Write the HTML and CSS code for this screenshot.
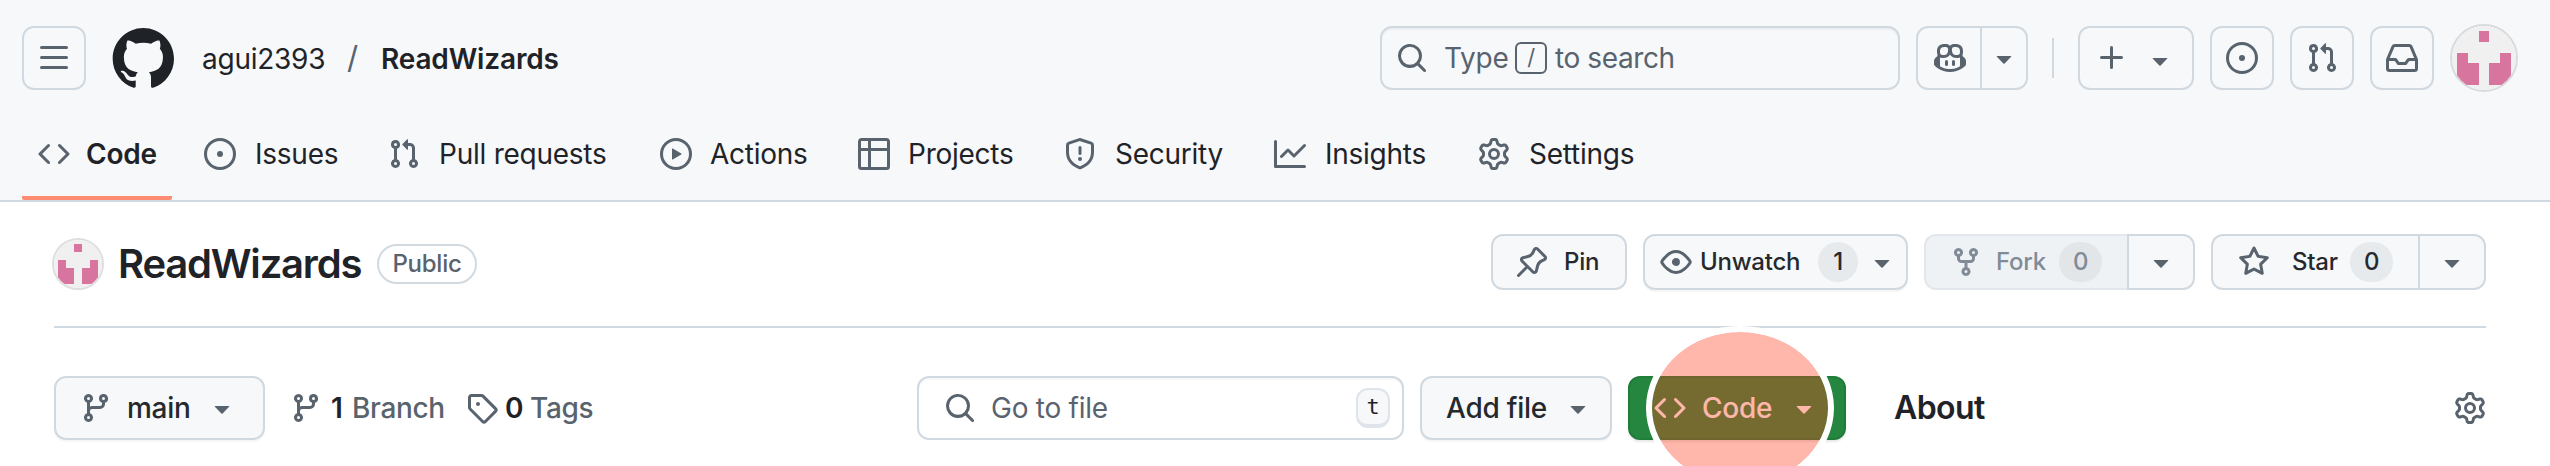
FILE: index.html
```
<!DOCTYPE html>
<html lang="en">
<head>
<meta charset="utf-8">
<title>ReadWizards</title>
<link rel="stylesheet" href="styles.css">
</head>
<body>
<svg class="sprite" aria-hidden="true">
  <symbol id="bars" viewBox="0 0 16 16"><path d="M1 2.75A.75.75 0 0 1 1.75 2h12.5a.75.75 0 0 1 0 1.5H1.75A.75.75 0 0 1 1 2.75Zm0 5A.75.75 0 0 1 1.75 7h12.5a.75.75 0 0 1 0 1.5H1.75A.75.75 0 0 1 1 7.75ZM1.75 12h12.5a.75.75 0 0 1 0 1.5H1.75a.75.75 0 0 1 0-1.5Z"/></symbol>
  <symbol id="mark" viewBox="0 0 24 24"><path d="M12.5.75C6.146.75 1 5.896 1 12.25c0 5.089 3.292 9.387 7.863 10.91.575.101.79-.244.79-.546 0-.273-.014-1.178-.014-2.142-2.889.532-3.636-.704-3.866-1.35-.13-.331-.69-1.352-1.18-1.625-.402-.216-.977-.748-.014-.762.906-.014 1.553.834 1.769 1.179 1.035 1.74 2.688 1.25 3.349.948.1-.747.402-1.25.733-1.538-2.559-.287-5.232-1.279-5.232-5.678 0-1.25.445-2.285 1.178-3.09-.115-.288-.517-1.467.115-3.048 0 0 .963-.302 3.163 1.179.92-.259 1.897-.388 2.875-.388.977 0 1.955.13 2.875.388 2.2-1.495 3.162-1.179 3.162-1.179.633 1.581.23 2.76.115 3.048.733.805 1.179 1.825 1.179 3.09 0 4.413-2.688 5.39-5.247 5.678.417.36.776 1.05.776 2.128 0 1.538-.014 2.774-.014 3.162 0 .302.216.662.79.547C20.709 21.637 24 17.324 24 12.25 24 5.896 18.854.75 12.5.75Z"/></symbol>
  <symbol id="code" viewBox="0 0 16 16"><path d="m11.28 3.22 4.25 4.25a.75.75 0 0 1 0 1.06l-4.25 4.25a.749.749 0 0 1-1.275-.326.749.749 0 0 1 .215-.734L13.94 8l-3.72-3.72a.749.749 0 0 1 .326-1.275.749.749 0 0 1 .734.215Zm-6.56 0a.751.751 0 0 1 1.042.018.751.751 0 0 1 .018 1.042L2.06 8l3.72 3.72a.749.749 0 0 1-.326 1.275.749.749 0 0 1-.734-.215L.47 8.53a.75.75 0 0 1 0-1.06Z"/></symbol>
  <symbol id="issue" viewBox="0 0 16 16"><path d="M8 9.5a1.5 1.5 0 1 0 0-3 1.5 1.5 0 0 0 0 3Z"/><path d="M8 0a8 8 0 1 1 0 16A8 8 0 0 1 8 0ZM1.5 8a6.5 6.5 0 1 0 13 0 6.5 6.5 0 0 0-13 0Z"/></symbol>
  <symbol id="pull" viewBox="0 0 16 16"><path d="M1.5 3.25a2.25 2.25 0 1 1 3 2.122v5.256a2.251 2.251 0 1 1-1.5 0V5.372A2.25 2.25 0 0 1 1.5 3.25Zm5.677-.177L9.573.677A.25.25 0 0 1 10 .854V2.5h1A2.5 2.5 0 0 1 13.5 5v5.628a2.251 2.251 0 1 1-1.5 0V5a1 1 0 0 0-1-1h-1v1.646a.25.25 0 0 1-.427.177L7.177 3.427a.25.25 0 0 1 0-.354ZM3.75 2.5a.75.75 0 1 0 0 1.5.75.75 0 0 0 0-1.5Zm0 9.5a.75.75 0 1 0 0 1.5.75.75 0 0 0 0-1.5Zm8.25.75a.75.75 0 1 0 1.5 0 .75.75 0 0 0-1.5 0Z"/></symbol>
  <symbol id="play" viewBox="0 0 16 16"><path d="M8 0a8 8 0 1 1 0 16A8 8 0 0 1 8 0ZM1.5 8a6.5 6.5 0 1 0 13 0 6.5 6.5 0 0 0-13 0Zm4.879-2.773 4.264 2.559a.25.25 0 0 1 0 .428l-4.264 2.559A.25.25 0 0 1 6 10.559V5.442a.25.25 0 0 1 .379-.215Z"/></symbol>
  <symbol id="table" viewBox="0 0 16 16"><path d="M0 1.75C0 .784.784 0 1.75 0h12.5C15.216 0 16 .784 16 1.75v12.5A1.75 1.75 0 0 1 14.25 16H1.75A1.75 1.75 0 0 1 0 14.25ZM6.5 6.5v8h7.75a.25.25 0 0 0 .25-.25V6.5Zm8-1.5V1.75a.25.25 0 0 0-.25-.25H6.5V5Zm-13 1.5v7.75c0 .138.112.25.25.25H5v-8ZM5 5V1.5H1.75a.25.25 0 0 0-.25.25V5Z"/></symbol>
  <symbol id="shield" viewBox="0 0 16 16"><path d="M7.467.133a1.748 1.748 0 0 1 1.066 0l5.25 1.68A1.75 1.75 0 0 1 15 3.48V7c0 1.566-.32 3.182-1.303 4.682-.983 1.498-2.585 2.813-5.032 3.855a1.697 1.697 0 0 1-1.33 0c-2.447-1.042-4.049-2.357-5.032-3.855C1.32 10.182 1 8.566 1 7V3.48a1.75 1.75 0 0 1 1.217-1.667Zm.61 1.429a.25.25 0 0 0-.153 0l-5.25 1.68a.25.25 0 0 0-.174.238V7c0 1.358.275 2.666 1.057 3.86.784 1.194 2.121 2.34 4.366 3.297a.196.196 0 0 0 .154 0c2.245-.956 3.582-2.104 4.366-3.298C13.225 9.666 13.5 8.36 13.5 7V3.48a.251.251 0 0 0-.174-.237l-5.25-1.68ZM8.75 4.75v3a.75.75 0 0 1-1.5 0v-3a.75.75 0 0 1 1.5 0ZM9 10.5a1 1 0 1 1-2 0 1 1 0 0 1 2 0Z"/></symbol>
  <symbol id="graph" viewBox="0 0 16 16"><path d="M1.5 1.75V13.5h13.75a.75.75 0 0 1 0 1.5H.75a.75.75 0 0 1-.75-.75V1.75a.75.75 0 0 1 1.5 0Zm14.28 2.53-5.25 5.25a.75.75 0 0 1-1.06 0L7 7.06 4.28 9.78a.751.751 0 0 1-1.042-.018.751.751 0 0 1-.018-1.042l3.25-3.25a.75.75 0 0 1 1.06 0L10 7.94l4.72-4.72a.751.751 0 0 1 1.042.018.751.751 0 0 1 .018 1.042Z"/></symbol>
  <symbol id="gear" viewBox="0 0 16 16"><path d="M8 0a8.2 8.2 0 0 1 .701.031C9.444.095 9.99.645 10.16 1.29l.288 1.107c.018.066.079.158.212.224.231.114.454.243.668.386.123.082.233.09.299.071l1.103-.303c.644-.176 1.392.021 1.82.63.27.385.506.792.704 1.218.315.675.111 1.422-.364 1.891l-.814.806c-.049.048-.098.147-.088.294.016.257.016.515 0 .772-.01.147.038.246.088.294l.814.806c.475.469.679 1.216.364 1.891a7.977 7.977 0 0 1-.704 1.217c-.428.61-1.176.807-1.82.63l-1.102-.302c-.067-.019-.177-.011-.3.071a5.909 5.909 0 0 1-.668.386c-.133.066-.194.158-.211.224l-.29 1.106c-.168.646-.715 1.196-1.458 1.26a8.006 8.006 0 0 1-1.402 0c-.743-.064-1.289-.614-1.458-1.26l-.289-1.106c-.018-.066-.079-.158-.212-.224a5.738 5.738 0 0 1-.668-.386c-.123-.082-.233-.09-.299-.071l-1.103.303c-.644.176-1.392-.021-1.82-.63a8.12 8.12 0 0 1-.704-1.218c-.315-.675-.111-1.422.363-1.891l.815-.806c.05-.048.098-.147.088-.294a6.214 6.214 0 0 1 0-.772c.01-.147-.038-.246-.088-.294l-.815-.806C.635 6.045.431 5.298.746 4.623a7.92 7.92 0 0 1 .704-1.217c.428-.61 1.176-.807 1.82-.63l1.102.302c.067.019.177.011.3-.071.214-.143.437-.272.668-.386.133-.066.194-.158.211-.224l.29-1.106C6.009.645 6.556.095 7.299.03 7.53.01 7.764 0 8 0Zm-.571 1.525c-.036.003-.108.036-.137.146l-.289 1.105c-.147.561-.549.967-.998 1.189-.173.086-.34.183-.5.29-.417.278-.97.423-1.529.27l-1.103-.303c-.109-.03-.175.016-.195.045-.22.312-.412.644-.573.99-.014.031-.021.11.059.19l.815.806c.411.406.562.957.53 1.456a4.709 4.709 0 0 0 0 .582c.032.499-.119 1.05-.53 1.456l-.815.806c-.081.08-.073.159-.059.19.162.346.353.677.573.989.02.03.085.076.195.046l1.102-.303c.56-.153 1.113-.008 1.53.27.161.107.328.204.501.29.447.222.85.629.997 1.189l.289 1.105c.029.109.101.143.137.146a6.6 6.6 0 0 0 1.142 0c.036-.003.108-.036.137-.146l.289-1.105c.147-.561.549-.967.998-1.189.173-.086.34-.183.5-.29.417-.278.97-.423 1.529-.27l1.103.303c.109.029.175-.016.195-.045.22-.313.411-.644.573-.99.014-.031.021-.11-.059-.19l-.815-.806c-.411-.406-.562-.957-.53-1.456a4.709 4.709 0 0 0 0-.582c-.032-.499.119-1.05.53-1.456l.815-.806c.081-.08.073-.159.059-.19a6.464 6.464 0 0 0-.573-.989c-.02-.03-.085-.076-.195-.046l-1.102.303c-.56.153-1.113.008-1.53-.27a4.44 4.44 0 0 0-.501-.29c-.447-.222-.85-.629-.997-1.189l-.289-1.105c-.029-.11-.101-.143-.137-.146a6.6 6.6 0 0 0-1.142 0ZM11 8a3 3 0 1 1-6 0 3 3 0 0 1 6 0ZM9.5 8a1.5 1.5 0 1 0-3.001.001A1.5 1.5 0 0 0 9.5 8Z"/></symbol>
  <symbol id="search" viewBox="0 0 16 16"><path d="M10.68 11.74a6 6 0 0 1-7.922-8.982 6 6 0 0 1 8.982 7.922l3.04 3.04a.749.749 0 0 1-.326 1.275.749.749 0 0 1-.734-.215ZM11.5 7a4.499 4.499 0 1 0-8.997 0A4.499 4.499 0 0 0 11.5 7Z"/></symbol>
  <symbol id="copilot" viewBox="0 0 16 16"><path d="M7.998 15.035c-4.562 0-7.873-2.914-7.998-3.749V9.338c.085-.628.677-1.686 1.588-2.065.013-.07.024-.143.036-.218.029-.183.06-.384.126-.612-.201-.508-.254-1.084-.254-1.656 0-.87.128-1.769.693-2.484.579-.733 1.494-1.124 2.724-1.261 1.206-.134 2.262.034 2.944.765.05.053.096.108.139.165.044-.057.094-.112.143-.165.682-.731 1.738-.899 2.944-.765 1.23.137 2.145.528 2.724 1.261.566.715.693 1.614.693 2.484 0 .572-.053 1.148-.254 1.656.066.228.098.429.126.612.012.076.024.148.037.218.924.385 1.522 1.471 1.591 2.095v1.872c0 .766-3.351 3.795-8.002 3.795Zm0-1.485c2.28 0 4.584-1.11 5.002-1.433V7.862l-.023-.116c-.49.21-1.075.291-1.727.291-1.146 0-2.059-.327-2.71-.991A3.222 3.222 0 0 1 8 6.303a3.24 3.24 0 0 1-.544.743c-.65.664-1.563.991-2.71.991-.652 0-1.236-.081-1.727-.291l-.023.116v4.255c.419.323 2.722 1.433 5.002 1.433ZM6.762 2.83c-.193-.206-.637-.413-1.682-.297-1.019.113-1.479.404-1.713.7-.247.312-.369.789-.369 1.554 0 .793.129 1.171.308 1.371.162.181.519.379 1.442.379.853 0 1.339-.235 1.638-.54.315-.322.527-.827.617-1.553.117-.935-.037-1.395-.241-1.614Zm4.155-.297c-1.044-.116-1.488.091-1.681.297-.204.219-.359.679-.242 1.614.091.726.303 1.231.618 1.553.299.305.784.54 1.638.54.922 0 1.28-.198 1.442-.379.179-.2.308-.578.308-1.371 0-.765-.123-1.242-.37-1.554-.233-.296-.693-.587-1.713-.7Z"/><path d="M6.25 9.037a.75.75 0 0 1 .75.75v1.501a.75.75 0 0 1-1.5 0V9.787a.75.75 0 0 1 .75-.75Zm4.25.75v1.501a.75.75 0 0 1-1.5 0V9.787a.75.75 0 0 1 1.5 0Z"/></symbol>
  <symbol id="caret" viewBox="0 0 16 16"><path d="m4.427 7.427 3.396 3.396a.25.25 0 0 0 .354 0l3.396-3.396A.25.25 0 0 0 11.396 7H4.604a.25.25 0 0 0-.177.427Z"/></symbol>
  <symbol id="plus" viewBox="0 0 16 16"><path d="M7.75 2a.75.75 0 0 1 .75.75V7h4.25a.75.75 0 0 1 0 1.5H8.5v4.25a.75.75 0 0 1-1.5 0V8.5H2.75a.75.75 0 0 1 0-1.5H7V2.75A.75.75 0 0 1 7.75 2Z"/></symbol>
  <symbol id="inbox" viewBox="0 0 16 16"><path d="M2.8 2.06A1.75 1.75 0 0 1 4.41 1h7.18c.7 0 1.333.417 1.61 1.06l2.74 6.395c.04.093.06.194.06.295v4.5A1.75 1.75 0 0 1 14.25 15H1.75A1.75 1.75 0 0 1 0 13.25v-4.5c0-.101.02-.202.06-.295Zm1.61.44a.25.25 0 0 0-.23.152L1.887 8H4.75a.75.75 0 0 1 .6.3L6.625 10h2.75l1.275-1.7a.75.75 0 0 1 .6-.3h2.863L11.82 2.652a.25.25 0 0 0-.23-.152Zm10.09 7h-2.875l-1.275 1.7a.75.75 0 0 1-.6.3h-3.5a.75.75 0 0 1-.6-.3L4.375 9.5H1.5v3.75c0 .138.112.25.25.25h12.5a.25.25 0 0 0 .25-.25Z"/></symbol>
  <symbol id="pin" viewBox="0 0 16 16"><path d="m11.294.984 3.722 3.722a1.75 1.75 0 0 1-.504 2.826l-1.327.613a3.089 3.089 0 0 0-1.707 2.084l-.584 2.454c-.317 1.332-1.972 1.8-2.94.832L5.75 11.311 1.78 15.28a.749.749 0 1 1-1.06-1.06l3.969-3.97-2.204-2.204c-.968-.968-.5-2.623.832-2.94l2.454-.584a3.08 3.08 0 0 0 2.084-1.707l.613-1.327a1.75 1.75 0 0 1 2.826-.504ZM6.283 9.723l2.732 2.731a.25.25 0 0 0 .42-.119l.584-2.454a4.586 4.586 0 0 1 2.537-3.098l1.328-.613a.25.25 0 0 0 .072-.404l-3.722-3.722a.25.25 0 0 0-.404.072l-.613 1.328a4.584 4.584 0 0 1-3.098 2.537l-2.454.584a.25.25 0 0 0-.119.42l2.731 2.732Z"/></symbol>
  <symbol id="eye" viewBox="0 0 16 16"><path d="M8 2c1.981 0 3.671.992 4.933 2.078 1.27 1.091 2.187 2.345 2.637 3.023a1.62 1.62 0 0 1 0 1.798c-.45.678-1.367 1.932-2.637 3.023C11.67 13.008 9.981 14 8 14c-1.981 0-3.671-.992-4.933-2.078C1.797 10.83.88 9.576.43 8.898a1.62 1.62 0 0 1 0-1.798c.45-.677 1.367-1.931 2.637-3.022C4.33 2.992 6.019 2 8 2ZM1.679 7.932a.12.12 0 0 0 0 .136c.411.622 1.241 1.75 2.366 2.717C5.176 11.758 6.527 12.5 8 12.5c1.473 0 2.825-.742 3.955-1.715 1.124-.967 1.954-2.096 2.366-2.717a.12.12 0 0 0 0-.136c-.412-.621-1.242-1.75-2.366-2.717C10.824 4.242 9.473 3.5 8 3.5c-1.473 0-2.825.742-3.955 1.715-1.124.967-1.954 2.096-2.366 2.717ZM8 10a2 2 0 1 1-.001-3.999A2 2 0 0 1 8 10Z"/></symbol>
  <symbol id="fork" viewBox="0 0 16 16"><path d="M5 5.372v.878c0 .414.336.75.75.75h4.5a.75.75 0 0 0 .75-.75v-.878a2.25 2.25 0 1 1 1.5 0v.878a2.25 2.25 0 0 1-2.25 2.25h-1.5v2.128a2.251 2.251 0 1 1-1.5 0V8.5h-1.5A2.25 2.25 0 0 1 3.5 6.25v-.878a2.25 2.25 0 1 1 1.5 0ZM5 3.25a.75.75 0 1 0-1.5 0 .75.75 0 0 0 1.5 0Zm6.75.75a.75.75 0 1 0 0-1.5.75.75 0 0 0 0 1.5Zm-3 8.75a.75.75 0 1 0-1.5 0 .75.75 0 0 0 1.5 0Z"/></symbol>
  <symbol id="star" viewBox="0 0 16 16"><path d="M8 .25a.75.75 0 0 1 .673.418l1.882 3.815 4.21.612a.75.75 0 0 1 .416 1.279l-3.046 2.97.719 4.192a.751.751 0 0 1-1.088.791L8 12.347l-3.766 1.98a.75.75 0 0 1-1.088-.79l.72-4.194L.818 6.374a.75.75 0 0 1 .416-1.28l4.21-.611L7.327.668A.75.75 0 0 1 8 .25Zm0 2.445L6.615 5.5a.75.75 0 0 1-.564.41l-3.097.45 2.24 2.184a.75.75 0 0 1 .216.664l-.528 3.084 2.769-1.456a.75.75 0 0 1 .698 0l2.77 1.456-.53-3.084a.75.75 0 0 1 .216-.664l2.24-2.183-3.096-.45a.75.75 0 0 1-.564-.41L8 2.694Z"/></symbol>
  <symbol id="branch" viewBox="0 0 16 16"><path d="M9.5 3.25a2.25 2.25 0 1 1 3 2.122V6A2.5 2.5 0 0 1 10 8.5H6a1 1 0 0 0-1 1v1.128a2.251 2.251 0 1 1-1.5 0V5.372a2.25 2.25 0 1 1 1.5 0v1.836A2.493 2.493 0 0 1 6 7h4a1 1 0 0 0 1-1v-.628A2.25 2.25 0 0 1 9.5 3.25Zm-6 0a.75.75 0 1 0 1.5 0 .75.75 0 0 0-1.5 0Zm8.25-.75a.75.75 0 1 0 0 1.5.75.75 0 0 0 0-1.5ZM4.25 12a.75.75 0 1 0 0 1.5.75.75 0 0 0 0-1.5Z"/></symbol>
  <symbol id="tag" viewBox="0 0 16 16"><path d="M1 7.775V2.75C1 1.784 1.784 1 2.75 1h5.025c.464 0 .91.184 1.238.513l6.25 6.25a1.75 1.75 0 0 1 0 2.474l-5.026 5.026a1.75 1.75 0 0 1-2.474 0l-6.25-6.25A1.752 1.752 0 0 1 1 7.775Zm1.5 0c0 .066.026.13.073.177l6.25 6.25a.25.25 0 0 0 .354 0l5.025-5.025a.25.25 0 0 0 0-.354l-6.25-6.25a.25.25 0 0 0-.177-.073H2.75a.25.25 0 0 0-.25.25ZM6 5a1 1 0 1 1 0 2 1 1 0 0 1 0-2Z"/></symbol>
  <symbol id="identicon" viewBox="0 0 12 12"><path fill="#f0f0f0" d="M0 0h12v12H0z"/><path fill="#d8759f" shape-rendering="crispEdges" d="M5 1h2v2H5zM1 5h2v2h2v4H1zM9 5h2v6H7V7h2z"/></symbol>
</svg>

<header class="header">
  <div class="topbar">
    <button class="btn-outline menu"><svg class="icon"><use href="#bars"/></svg></button>
    <svg class="logo"><use href="#mark"/></svg>
    <span class="owner">agui2393</span>
    <span class="slash">/</span>
    <span class="crumb">ReadWizards</span>
    <div class="search">
      <svg class="icon"><use href="#search"/></svg>
      <span class="search-type">Type</span><kbd class="slash-key">/</kbd><span class="search-rest">to search</span>
    </div>
    <div class="btn-outline copilot">
      <span class="copilot-main"><svg class="icon"><use href="#copilot"/></svg></span>
      <span class="copilot-menu"><svg class="icon"><use href="#caret"/></svg></span>
    </div>
    <span class="rule"></span>
    <button class="btn-outline create"><svg class="icon"><use href="#plus"/></svg><svg class="icon low"><use href="#caret"/></svg></button>
    <button class="btn-outline"><svg class="icon"><use href="#issue"/></svg></button>
    <button class="btn-outline"><svg class="icon"><use href="#pull"/></svg></button>
    <button class="btn-outline"><svg class="icon"><use href="#inbox"/></svg></button>
    <svg class="avatar"><use href="#identicon"/></svg>
  </div>
  <nav class="tabs">
    <a class="tab active"><svg class="icon"><use href="#code"/></svg><span>Code</span></a>
    <a class="tab issues"><svg class="icon"><use href="#issue"/></svg><span>Issues</span></a>
    <a class="tab pulls"><svg class="icon"><use href="#pull"/></svg><span>Pull requests</span></a>
    <a class="tab actions"><svg class="icon"><use href="#play"/></svg><span>Actions</span></a>
    <a class="tab projects"><svg class="icon"><use href="#table"/></svg><span>Projects</span></a>
    <a class="tab security"><svg class="icon"><use href="#shield"/></svg><span>Security</span></a>
    <a class="tab insights"><svg class="icon"><use href="#graph"/></svg><span>Insights</span></a>
    <a class="tab settings"><svg class="icon"><use href="#gear"/></svg><span>Settings</span></a>
  </nav>
</header>

<main>
  <section class="repo-head">
    <svg class="avatar small"><use href="#identicon"/></svg>
    <h1 class="title">ReadWizards</h1>
    <span class="badge">Public</span>
    <div class="actions-row">
      <button class="btn sm pin"><svg class="icon"><use href="#pin"/></svg><span>Pin</span></button>
      <button class="btn sm unwatch raised"><svg class="icon"><use href="#eye"/></svg><span>Unwatch</span><span class="count">1</span><svg class="icon end"><use href="#caret"/></svg></button>
      <div class="group">
        <button class="btn sm fork"><svg class="icon"><use href="#fork"/></svg><span>Fork</span><span class="count">0</span></button>
        <button class="btn sm drop"><svg class="icon"><use href="#caret"/></svg></button>
      </div>
      <div class="group">
        <button class="btn sm star"><svg class="icon"><use href="#star"/></svg><span>Star</span><span class="count">0</span></button>
        <button class="btn sm drop"><svg class="icon"><use href="#caret"/></svg></button>
      </div>
    </div>
  </section>

  <section class="file-bar">
    <button class="btn main-branch raised"><svg class="icon"><use href="#branch"/></svg><span>main</span><svg class="icon end"><use href="#caret"/></svg></button>
    <a class="stat branches"><svg class="icon"><use href="#branch"/></svg><b>1</b><span>Branch</span></a>
    <a class="stat tags"><svg class="icon"><use href="#tag"/></svg><b>0</b><span>Tags</span></a>
    <div class="goto"><svg class="icon"><use href="#search"/></svg><span>Go to file</span><kbd class="t-key">t</kbd></div>
    <button class="btn add raised"><span>Add file</span><svg class="icon end"><use href="#caret"/></svg></button>
    <div class="code-wrap">
      <button class="btn code-btn"><svg class="icon"><use href="#code"/></svg><span>Code</span><svg class="icon end"><use href="#caret"/></svg></button>
      <span class="spotlight"></span>
    </div>
    <h2 class="about">About</h2>
    <svg class="icon gear"><use href="#gear"/></svg>
  </section>
</main>
</body>
</html>
```
FILE: styles.css
```
* { box-sizing: border-box; }
body {
  margin: 0;
  width: 2550px;
  height: 466px;
  overflow: hidden;
  background: #fff;
  color: #1f2328;
  font: 400 28px/40px Inter, "Liberation Sans", sans-serif;
  letter-spacing: -0.25px;
}
button { font: inherit; letter-spacing: inherit; color: inherit; margin: 0; text-align: left; }
span, b, kbd, h1, h2 { white-space: nowrap; }
.sprite { position: absolute; width: 0; height: 0; }
.icon { display: block; flex: none; width: 32px; height: 32px; fill: #59636e; }
.end { margin-left: auto; }

/* Global header */
.header { height: 202px; background: #f6f8fa; border-bottom: 2px solid #d1d9e0; }
.topbar { display: flex; align-items: center; height: 116px; padding: 0 32px 0 22px; }
.btn-outline {
  display: flex; align-items: center; justify-content: center; flex: none;
  width: 64px; height: 64px; margin-right: 16px; padding: 0;
  background: transparent; border: 2px solid #d1d9e0; border-radius: 12px;
}
.menu { margin-right: 24px; }
.logo { width: 64px; height: 64px; flex: none; fill: #1f2328; }
.owner { width: 122px; margin: 2px 0 0 28px; }
.slash { width: 14px; margin-left: 23px; color: #59636e; font-size: 31px; }
.crumb { margin: 2px 0 0 20px; font-weight: 600; letter-spacing: -0.15px; }
.search {
  display: flex; align-items: center; width: 520px; height: 64px;
  margin-left: auto; margin-right: 16px; padding-left: 14px;
  border: 2px solid #d1d9e0; border-radius: 12px; color: #59636e;
  box-shadow: inset 0 2px 0 rgba(31, 35, 40, .04);
}
.search-type { width: 71px; margin-left: 16px; }
.slash-key {
  width: 32px; height: 32px; border: 2px solid #59636e; border-radius: 6px;
  font: 400 22px/27px Inter, sans-serif; text-align: center;
}
.search-rest { margin-left: 8px; letter-spacing: -0.4px; }
.copilot { width: 112px; margin-right: 24px; justify-content: flex-start; }
.copilot-main { padding: 14px 14px 14px 16px; border-right: 2px solid #d1d9e0; }
.copilot-menu { padding-left: 6px; }
.rule { width: 2px; height: 40px; margin-right: 24px; background: #d1d9e0; }
.create { width: 116px; gap: 16px; }
.low { margin-top: 4px; }
.avatar {
  flex: none; width: 68px; height: 68px; border: 2px solid #d8dadc;
  border-radius: 50%; overflow: hidden;
}
.tabs { display: flex; height: 84px; padding: 0 0 8px 22px; }
.tab { display: flex; align-items: center; gap: 19px; height: 76px; padding-left: 16px; }
.active {
  width: 150px; height: 84px; margin-right: 16px; padding-bottom: 4px; gap: 16px;
  border-bottom: 4px solid #fd8c73; border-radius: 2px; font-weight: 600;
}
.issues { width: 184px; }
.pulls { width: 272px; }
.actions { width: 198px; gap: 18px; }
.projects { width: 206px; gap: 18px; }
.security { width: 210px; }
.insights { width: 204px; }

/* Repository title row */
main { height: 264px; padding: 0 64px 0 54px; overflow: hidden; }
.repo-head { display: flex; align-items: center; height: 126px; border-bottom: 2px solid #d1d9e0; }
.small { width: 52px; height: 52px; margin-left: -2px; border-color: #dedede; }
.title { width: 259px; margin: 0 0 0 14px; font-size: 40px; font-weight: 600; letter-spacing: -1.2px; }
.badge {
  width: 100px; height: 40px; border: 2px solid #d1d9e0; border-radius: 20px;
  color: #59636e; font-size: 24px; font-weight: 500; line-height: 35px; text-align: center;
}
.btn {
  display: flex; align-items: center; flex: none; height: 64px; padding: 0;
  background: #f6f8fa; border: 2px solid #d1d9e0; border-radius: 12px;
  color: #25292e; font-weight: 500;
}
.raised { box-shadow: 0 2px 0 rgba(31, 35, 40, .04); }
.actions-row { display: flex; gap: 16px; margin: 0 0 4px auto; }
.sm { height: 56px; font-size: 24px; }
.group { display: flex; }
.count {
  width: 40px; height: 40px; border-radius: 20px; background: #e7eaed; text-align: center;
}
.pin { width: 136px; padding-left: 23px; }
.pin span { margin-left: 16px; }
.unwatch { width: 265px; padding: 0 8px 0 15px; }
.unwatch .icon + span { width: 118px; margin-left: 8px; }
.fork { width: 203px; padding-left: 24px; background: #eff2f5; border-color: #e3e7eb; border-right: 0; border-radius: 12px 0 0 12px; color: #818b98; }
.fork .icon { fill: #818b98; }
.fork .icon + span { width: 63px; margin-left: 14px; }
.fork .count, .star .count { width: 43px; }
.fork .count { background: #e2e6e9; }
.star { width: 207px; padding-left: 25px; border-right: 0; border-radius: 12px 0 0 12px; }
.star .icon + span { width: 58px; margin-left: 22px; }
.drop { width: 68px; padding-left: 16px; border-radius: 0 12px 12px 0; }

/* Branch and file controls */
.file-bar { display: flex; align-items: center; height: 64px; margin-top: 48px; }
.main-branch { width: 211px; padding: 0 25px 0 24px; }
.main-branch span { margin-left: 15px; }
.stat { display: flex; align-items: center; color: #59636e; font-weight: 500; letter-spacing: -0.35px; }
.stat b { color: #1f2328; font-weight: 600; }
.branches { width: 176px; margin-left: 25px; }
.branches b { width: 21px; margin-left: 9px; }
.tags b { width: 25px; margin-left: 7px; }
.goto {
  display: flex; align-items: center; width: 487px; height: 64px;
  margin-left: auto; margin-right: 16px; padding: 0 12px 0 25px;
  border: 2px solid #d1d9e0; border-radius: 12px; color: #59636e;
  box-shadow: inset 0 2px 0 rgba(31, 35, 40, .03);
}
.goto span { margin-left: 15px; }
.t-key {
  width: 34px; height: 40px; margin-left: auto; background: #f6f8fa; color: #1f2328;
  border: 2px solid #dfe4ea; border-bottom-width: 4px; border-radius: 12px;
  font: 400 22px/34px "DejaVu Sans Mono", monospace; text-align: center;
}
.add { width: 192px; margin-right: 16px; padding: 0 16px 0 24px; }
.code-wrap { position: relative; }
.code-btn { width: 218px; padding: 0 24px; background: #25873f; border-color: #1f7c39; color: #fff; box-shadow: 0 2px 2px rgba(31, 35, 40, .1); }
.code-btn .icon { fill: #fff; }
.code-btn span { margin-left: 16px; }
.spotlight {
  position: absolute; left: 18px; top: -50px; width: 188px; height: 164px;
  border: 6px solid #fff; border-radius: 50%;
  background: rgba(255, 60, 28, .37); background-clip: padding-box;
}
.about { width: 560px; margin: 0 0 0 48px; font-size: 32px; font-weight: 600; letter-spacing: -0.6px; }
```
